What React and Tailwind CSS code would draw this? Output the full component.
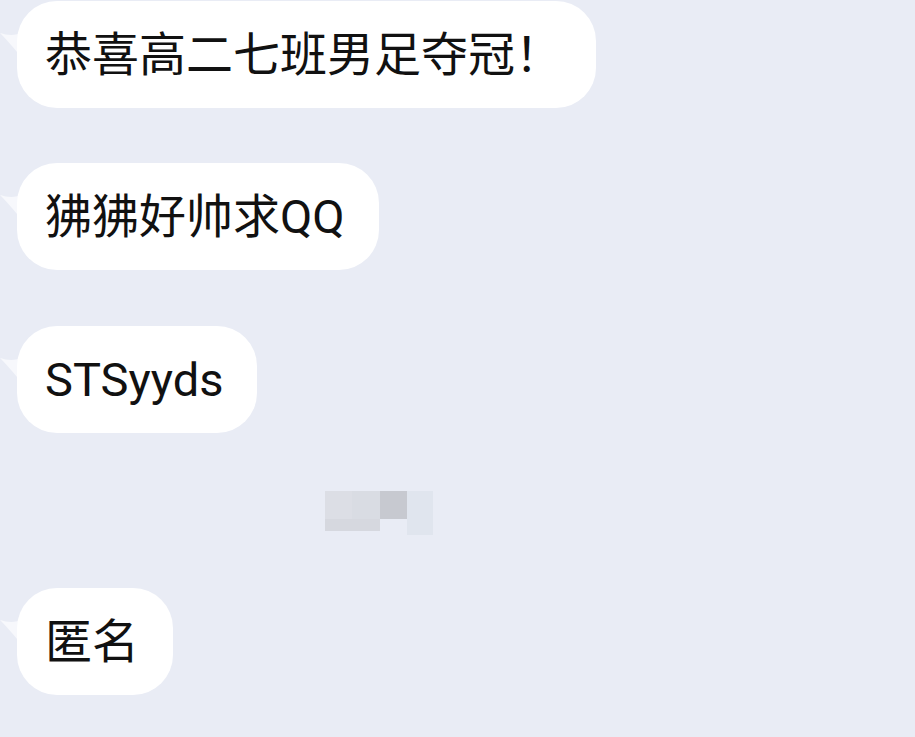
import React from "react";

function Bubble({ text, className = "" }) {
  return (
    <div className={"relative flex " + className}>
      <svg
        className="absolute left-[-17px] top-[26px]"
        width="24"
        height="36"
        viewBox="0 0 24 36"
      >
        <path d="M0 6 C8 8 14 10 24 4 L24 34 C18 26 10 16 0 6 Z" fill="#f7f8fc" />
      </svg>
      <div className="relative flex h-[107px] items-center rounded-[40px] bg-white pl-[28px] pr-[34px] text-[47px] leading-none text-[#111111]">
        {text}
      </div>
    </div>
  );
}

export default function App() {
  return (
    <div
      className="flex h-[737px] w-[915px] flex-col items-start overflow-hidden bg-[#e9ecf5] pl-[17px] pt-[1px]"
      style={{ fontFamily: '"Roboto", "Noto Sans CJK SC", sans-serif' }}
    >
      <Bubble text="恭喜高二七班男足夺冠！" />
      <Bubble text="狒狒好帅求QQ" className="mt-[55px]" />
      <Bubble text="STSyyds" className="mt-[56px]" />
      <div className="flex h-[155px] w-full items-center justify-start pl-[308px]">
        <div className="flex flex-col">
          <div className="flex">
            <div className="h-[28px] w-[27px] bg-[#dcdee5]" />
            <div className="h-[28px] w-[28px] bg-[#d9dce3]" />
            <div className="h-[28px] w-[27px] bg-[#c7c9d0]" />
            <div className="h-[44px] w-[26px] bg-[#e0e5ee]" />
          </div>
          <div className="mt-[-16px] h-[12px] w-[55px] bg-[#d6d8df]" />
        </div>
      </div>
      <Bubble text="匿名" />
    </div>
  );
}
